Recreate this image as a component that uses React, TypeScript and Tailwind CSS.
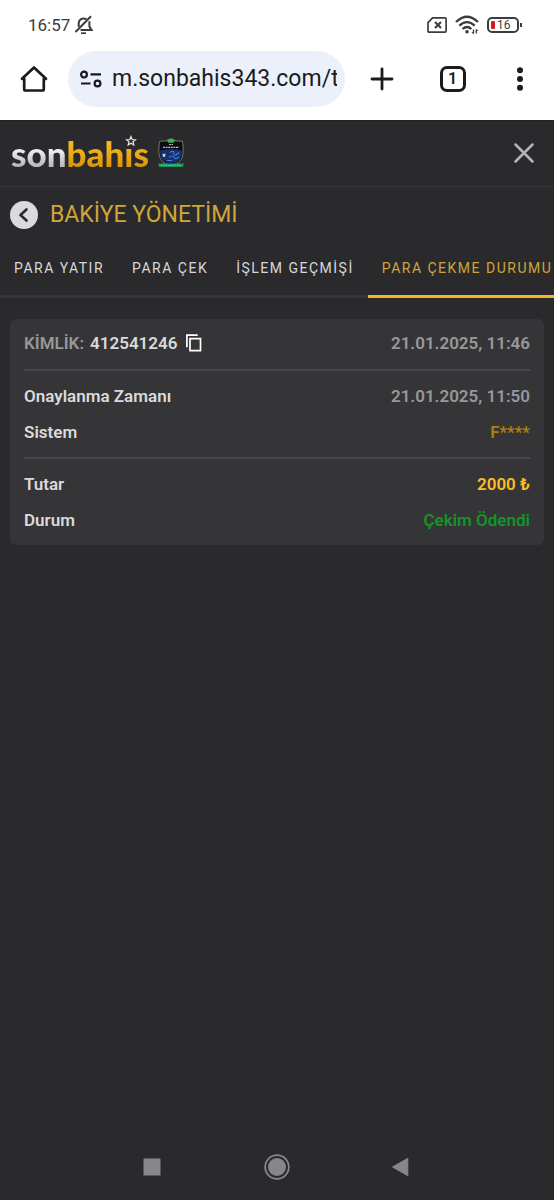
import type { ReactNode } from 'react';

function StatusBar() {
  return (
    <div className="flex h-12 items-center justify-between pt-0.5 pr-8 pl-7 text-[#3c3c3c]">
      <div className="flex items-center gap-1">
        <span className="text-[17px] leading-6">16:57</span>
        <svg className="h-5 w-5" viewBox="0 0 20 20" fill="none" stroke="currentColor" strokeWidth="2">
          <path d="M12.5 4.1C7.500 2 4.700 5.700 4.700 8v4" />
          <path d="M15.400 6.300v5.300l2.200 3.500H6.500" />
          <path d="M1.500 17 17 1.200" />
          <path d="M7 18.200h5" strokeWidth="1.700" />
        </svg>
      </div>
      <div className="flex items-center gap-2">
        <svg className="h-4 w-5" viewBox="0 0 20 16" fill="none" stroke="currentColor" strokeWidth="1.7">
          <path d="M5.5.9h12.6q1 0 1 1v12.2q0 1-1 1H2q-1 0-1-1V5.6Z" />
          <path d="m8 5 6 6m0-6-6 6" strokeWidth="2" />
        </svg>
        <svg className="h-5 w-6" viewBox="0 0 24 20" fill="none" stroke="currentColor" strokeWidth="2.3">
          <path d="M1 7Q12-3.5 23 7M4.3 10.6q7.7-7 15.4 0M7.6 14q4.4-4 8.8 0" />
          <circle cx="12" cy="16.8" r="1.8" fill="currentColor" stroke="none" />
          <path d="M18.5 14.5v4m2.8-4v4" strokeWidth="1.3" />
          <path d="m16.4 17.2 2.1 2.2v-2.2Zm7 -1.2-2.1-2.2v2.2Z" fill="currentColor" stroke="none" />
        </svg>
        <div className="flex items-center">
          <div className="flex h-4 w-8 items-center gap-0.5 rounded-[5px] border-2 border-current px-0.5">
            <span className="h-2 w-1 rounded-[1px] bg-[#d61a20]" />
            <span className="text-[12px] leading-3">16</span>
          </div>
          <span className="ml-px h-1 w-0.5 bg-current" />
        </div>
      </div>
    </div>
  );
}

function BrowserBar() {
  return (
    <div className="flex h-[72px] items-start pt-[3px] text-[#1b1b1d]">
      <button aria-label="Ana sayfa" className="flex h-14 w-[68px] shrink-0 items-center justify-center">
        <svg className="h-7 w-7" viewBox="0 0 28 28" fill="none" stroke="currentColor" strokeWidth="2.7" strokeLinejoin="round">
          <path d="M2 13.800 14 2.500l12 11.300h-2.200V24q0 1.500-1.500 1.500H5.700q-1.500 0-1.500-1.500V13.800Z" />
        </svg>
      </button>
      <div className="flex h-14 min-w-0 flex-1 items-center gap-2 rounded-full bg-[#ebf0fa] pr-2 pl-3">
        <svg className="h-5 w-6 shrink-0" viewBox="0 0 24 20" fill="none" stroke="currentColor" strokeWidth="2.2">
          <circle cx="4" cy="5.600" r="2.900" />
          <path d="M10.500 5.300H21M1 14.500h9.500" />
          <circle cx="17.500" cy="14.500" r="2.900" />
        </svg>
        <input
          aria-label="Adres"
          className="w-0 min-w-0 flex-1 bg-transparent text-[23px] leading-8 outline-none"
          defaultValue="m.sonbahis343.com/t"
        />
      </div>
      <button aria-label="Yeni sekme" className="flex h-14 w-[74px] shrink-0 items-center justify-center">
        <svg className="h-6 w-6" viewBox="0 0 24 24" fill="none" stroke="currentColor" strokeWidth="2.8" strokeLinecap="round">
          <path d="M12 2v20M2 12h20" />
        </svg>
      </button>
      <button aria-label="Sekmeler" className="flex h-14 w-[67px] shrink-0 items-center justify-center">
        <span className="flex h-[26px] w-[26px] items-center justify-center rounded-[7px] border-[3px] border-current text-[16px] leading-4 font-semibold">
          1
        </span>
      </button>
      <button aria-label="Menü" className="flex h-14 w-[68px] shrink-0 items-center justify-center">
        <svg className="h-7 w-2" viewBox="0 0 8 28" fill="currentColor">
          <circle cx="4" cy="5.300" r="3" />
          <circle cx="4" cy="14" r="3" />
          <circle cx="4" cy="22.700" r="3" />
        </svg>
      </button>
    </div>
  );
}

function Crest() {
  return (
    <svg className="h-[30px] w-[28px]" viewBox="0 0 28 30">
      <path d="M14 1c2 0 3 1.700 5 2 2 .2 4-.2 6.400.3.900 5.500 1.500 14-1.200 18.300C21.500 25.500 17 26.500 14 27.500c-3-1-7.500-2-10.200-5.900C1.100 17 1.700 8.500 2.600 3.300 5 2.800 7 3.200 9 3c2-.3 3-2 5-2Z" fill="#0b0d10" stroke="#8a825d" strokeWidth=".9" />
      <path d="M3 12.500Q14 9.500 25 12.500c0 4-.5 7-2 9-2 2.500-6 3.300-9 4.300-3-1-7-1.800-9-4.300-1.500-2-2-5-2-9Z" fill="#14306f" />
      <path d="m9.500 2 4.500-1.400L18.500 2l-2 2.700h-5Z" fill="#38b463" />
      <path d="M12 6.500h4M6 9.300h16" stroke="#b6bab7" strokeWidth="1.200" strokeDasharray="2 .6" />
      <path d="m7 15 .6 1.500 1.600.1-1.300 1 .5 1.600L7 18.300l-1.400.9.500-1.600-1.300-1 1.600-.1Z" fill="#eef" />
      <path d="M13 14.500q4-3 4 1t5-1M12 19.500q3-3 5 0t5-1M10 22.500h5" stroke="#4a7fd1" strokeWidth="1.100" fill="none" />
      <path d="M1 25.500h26l-1 3.500H2Z" fill="#16925a" />
      <path d="M4 27.200h20" stroke="#65e3ab" strokeWidth="1" strokeDasharray="1.500 .8" />
    </svg>
  );
}

function SiteHeader() {
  return (
    <header className="flex h-[67px] items-center justify-between border-t border-b border-t-[#242426] border-b-[#38383a] pr-4 pb-0.5 pl-[11px]">
      <a href="#" aria-label="sonbahis" className="flex items-center gap-2">
        <span className="relative font-[Lato,sans-serif] text-[35px] leading-10 font-black">
          <span className="bg-linear-to-b from-[#f4f4f6] from-40% to-[#b9b9bd] to-80% bg-clip-text text-transparent">son</span>
          <span className="bg-linear-to-b from-[#f6b81d] from-30% to-[#dc9708] to-80% bg-clip-text text-transparent">bahıs</span>
          <svg className="absolute top-0.5 right-3 h-3 w-3" viewBox="0 0 12 12" fill="#2b2b2d" stroke="#e7e4da" strokeWidth="1.200">
            <path d="m6 1.500 1.200 3 3.300.2-2.500 2 .8 3.200L6 8.200 3.200 9.900 4 6.700l-2.500-2 3.300-.2Z" />
          </svg>
        </span>
        <Crest />
      </a>
      <button aria-label="Kapat" className="flex h-7 w-7 items-center justify-center text-[#b5b5b7]">
        <svg className="h-5 w-5" viewBox="0 0 20 20" fill="none" stroke="currentColor" strokeWidth="2.500" strokeLinecap="round">
          <path d="m1.500 1.500 17 17m0-17-17 17" />
        </svg>
      </button>
    </header>
  );
}

const tabs = ['PARA YATIR', 'PARA ÇEK', 'İŞLEM GEÇMİŞİ', 'PARA ÇEKME DURUMU'];

function Tabs() {
  return (
    <nav className="flex overflow-hidden">
      {tabs.map((tab, i) => (
        <button
          key={tab}
          className={
            i === 3
              ? 'h-14 shrink-0 border-b-3 border-[#f2b81b] px-3.5 text-[14px] tracking-[1.5px] whitespace-nowrap text-[#cfa637]'
              : 'h-14 shrink-0 border-b-3 border-[#353537] px-3.5 text-[14px] tracking-[1.5px] whitespace-nowrap text-[#d8d8da]'
          }
        >
          {tab}
        </button>
      ))}
      <span className="h-14 flex-1 border-b-3 border-[#353537]" />
    </nav>
  );
}

function Row({ label, children }: { label: ReactNode; children: ReactNode }) {
  return (
    <div className="flex items-center justify-between py-1.5">
      <dt className="flex items-center text-[#dadadc]">{label}</dt>
      <dd>{children}</dd>
    </div>
  );
}

function TransactionCard() {
  return (
    <dl className="mx-2.5 mt-[21px] divide-y-2 divide-[#48484a] rounded-md bg-[#353537] px-3.5 text-[17px] leading-6 font-semibold">
      <div className="pt-1.5 pb-2">
        <Row
          label={
            <>
              <span className="mr-1.5 text-[#98989a]">KİMLİK:</span>
              412541246
              <button aria-label="Kopyala" className="ml-2 text-white">
                <svg className="h-[18px] w-[18px]" viewBox="0 0 18 18" fill="none" stroke="currentColor" strokeWidth="1.700">
                  <path d="M1.900 13.200V1.200h10.800M5 4.700h10.500v12H5Z" />
                </svg>
              </button>
            </>
          }
        >
          <span className="text-[#98989a]">21.01.2025, 11:46</span>
        </Row>
      </div>
      <div className="py-[7px]">
        <Row label="Onaylanma Zamanı">
          <span className="text-[#98989a]">21.01.2025, 11:50</span>
        </Row>
        <Row label="Sistem">
          <span className="text-[#ab810f]">F****</span>
        </Row>
      </div>
      <div className="py-[7px]">
        <Row label="Tutar">
          <span className="text-[#fcbd24]">2000 ₺</span>
        </Row>
        <Row label="Durum">
          <span className="text-[#16942a]">Çekim Ödendi</span>
        </Row>
      </div>
    </dl>
  );
}

function SystemNav() {
  return (
    <div className="mt-auto flex h-[66px] items-center justify-around px-[90px] text-[#878789]">
      <button aria-label="Son uygulamalar">
        <svg className="h-7 w-7" viewBox="0 0 28 28" fill="currentColor">
          <path d="M5.500 5.500h17v17h-17Z" />
        </svg>
      </button>
      <button aria-label="Ana ekran">
        <svg className="h-7 w-7" viewBox="0 0 28 28" fill="currentColor">
          <circle cx="14" cy="14" r="9" />
          <circle cx="14" cy="14" r="11.800" fill="none" stroke="currentColor" strokeWidth="1.800" />
        </svg>
      </button>
      <button aria-label="Geri">
        <svg className="h-7 w-7" viewBox="0 0 28 28" fill="currentColor" stroke="currentColor" strokeLinejoin="round">
          <path d="M4.500 14 19.800 5.300v17.400Z" />
        </svg>
      </button>
    </div>
  );
}

export default function App() {
  return (
    <div className="flex min-h-screen flex-col bg-[#2a2a2c] font-[Roboto,sans-serif]">
      <div className="bg-white">
        <StatusBar />
        <BrowserBar />
      </div>
      <SiteHeader />
      <div className="flex h-[55px] items-center gap-3 px-2.5">
        <button aria-label="Geri dön" className="flex h-7 w-7 items-center justify-center rounded-full bg-[#dadadc] text-[#2a2a2c]">
          <svg className="h-4 w-4" viewBox="0 0 16 16" fill="none" stroke="currentColor" strokeWidth="2.600" strokeLinecap="round" strokeLinejoin="round">
            <path d="M10.500 2.500 4.500 8l6 5.500" />
          </svg>
        </button>
        <h1 className="text-[23px] leading-7 text-[#cfa637]">BAKİYE YÖNETİMİ</h1>
      </div>
      <Tabs />
      <TransactionCard />
      <SystemNav />
    </div>
  );
}
